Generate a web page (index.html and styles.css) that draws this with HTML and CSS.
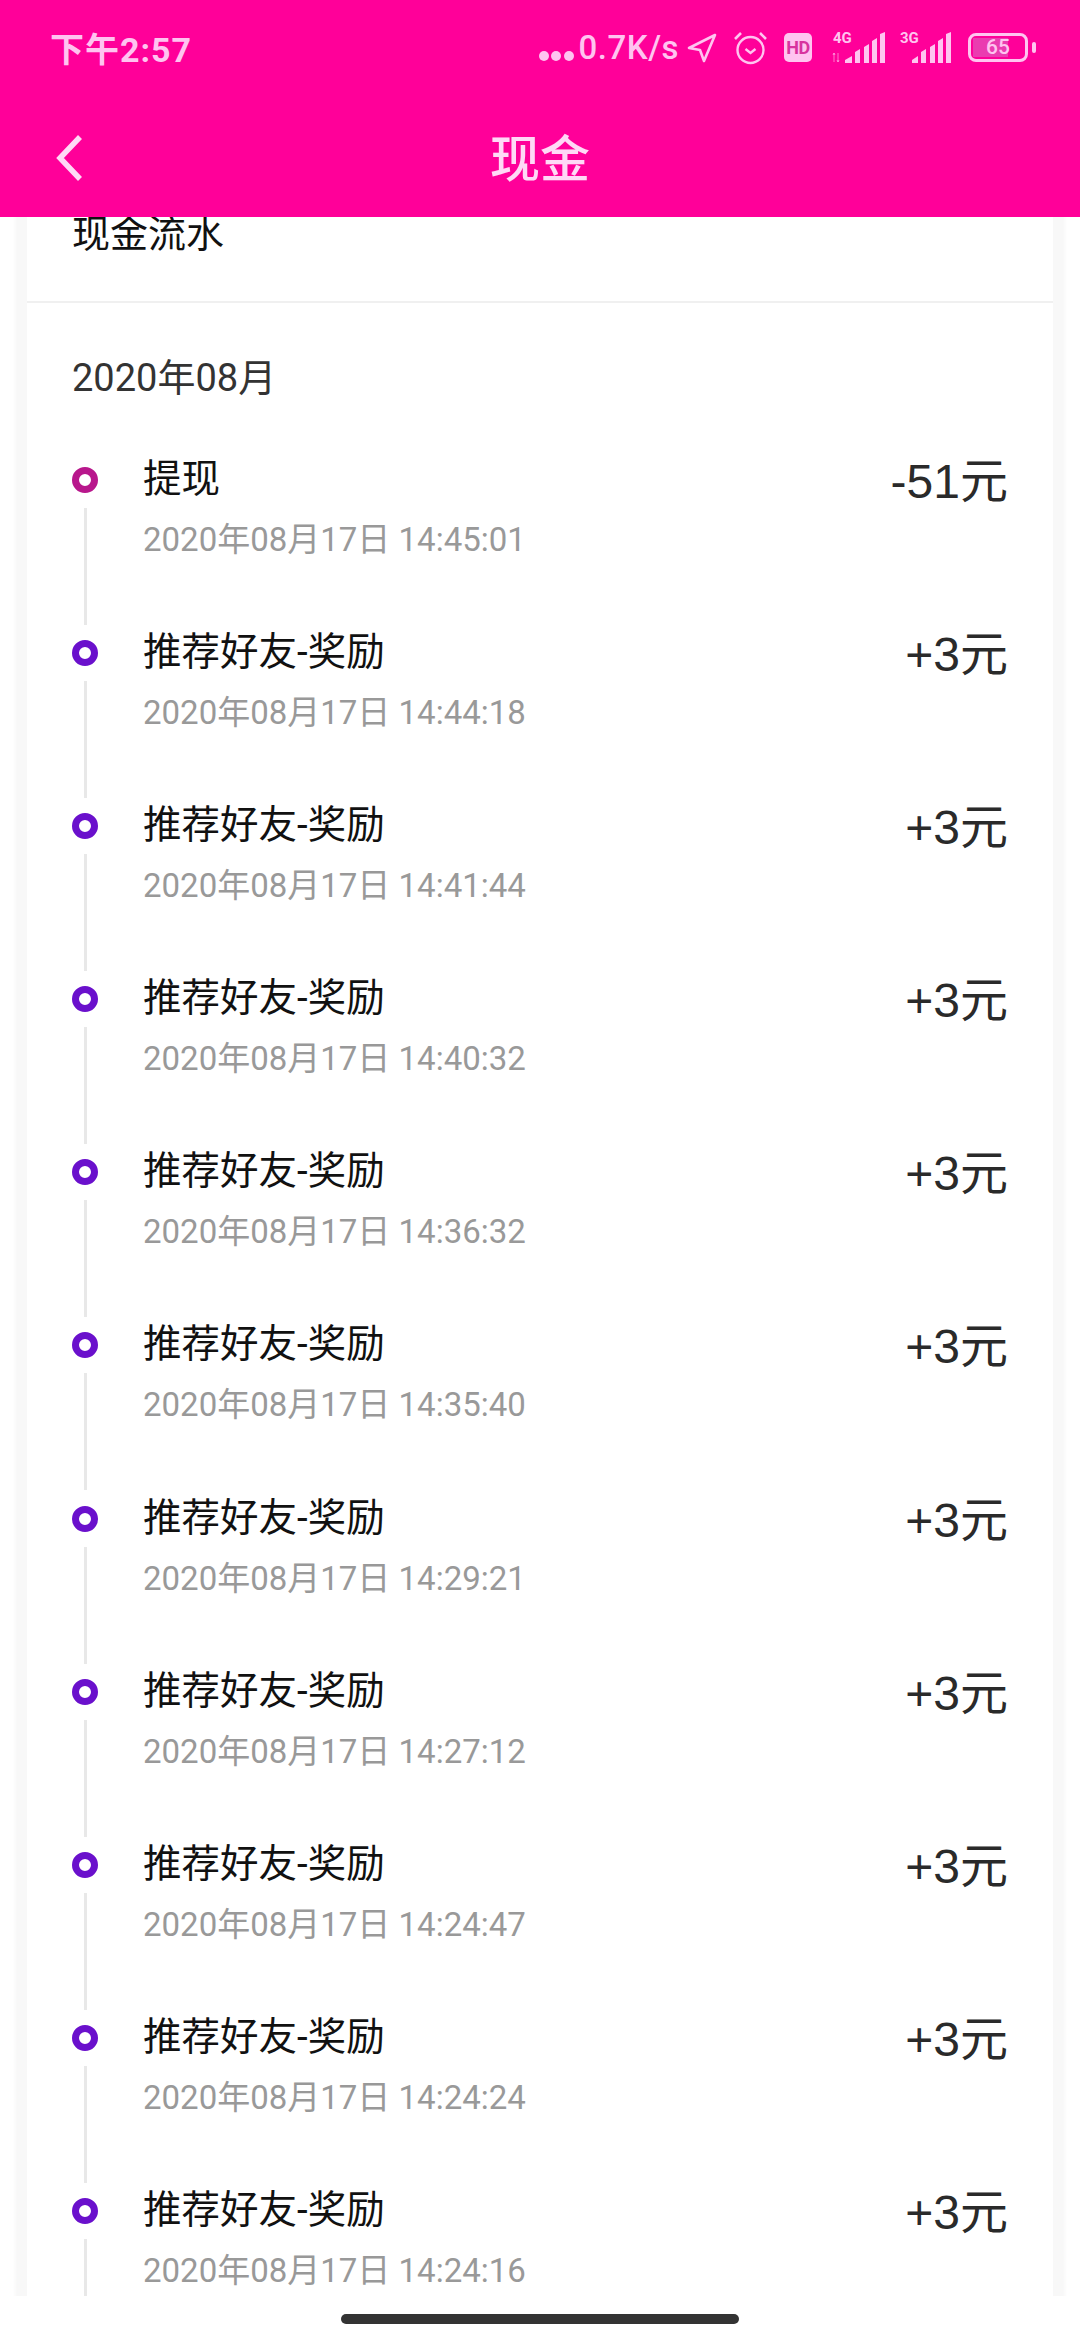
FILE: index.html
```html
<!DOCTYPE html>
<html lang="zh-CN">
  <head>
    <meta charset="UTF-8" />
    <meta name="viewport" content="width=device-width, initial-scale=1.0" />
    <title>现金</title>
    <link rel="stylesheet" href="styles.css">
  </head>
  <body>
    <header class="appbar">
      <div class="status">
        <span class="clock">下午2:57</span>
        <div class="status-icons">
          <span class="more"><i></i><i></i><i></i></span>
          <span class="speed">0.7K/s</span>
          <svg class="ico" width="30" height="30" viewBox="0 0 30 30"><path d="M28 2 2 15l11 2 4 11z" fill="none" stroke="currentColor" stroke-width="2.6" stroke-linejoin="round"/></svg>
          <svg class="ico ico-alarm" width="35" height="34" viewBox="0 0 35 34"><circle cx="17.5" cy="19" r="13" fill="none" stroke="currentColor" stroke-width="2.4"/><path d="M12.5 18l5 4 5-4" fill="none" stroke="currentColor" stroke-width="2.4"/><path d="M2 8l6-6M33 8l-6-6" stroke="currentColor" stroke-width="2.6"/></svg>
          <span class="hd">HD</span>
          <svg class="ico ico-net ico-4g" width="54" height="38" viewBox="0 -6 54 38"><text x="1" y="11" class="net-label">4G</text><path d="M2 21v9M1 23l1-2 1 2M6 21v9M5 28l1 2 1-2" stroke="currentColor" stroke-width="1" fill="none" opacity=".6"/><path d="M13 31v-3l7-4v7zM23 31V20l5-3v14zM32 31V15l5-3v19zM40 31V9l5-3v25zM48 31V2l5-2v31z" fill="currentColor"/></svg>
          <svg class="ico ico-net ico-3g" width="52" height="38" viewBox="0 -6 52 38"><text x="0" y="11" class="net-label">3G</text><path d="M12 31v-3l6-4v7zM21 31V20l5-3v14zM30 31V15l5-3v19zM38 31V9l5-3v25zM46 31V2l5-2v31z" fill="currentColor"/></svg>
          <span class="battery"><span class="battery-fill"></span><span class="battery-num">65</span></span>
        </div>
      </div>
      <nav class="navbar">
        <svg width="34" height="48" viewBox="0 0 34 48"><path d="M28 3 8 24l20 21" fill="none" stroke="currentColor" stroke-width="5.5"/></svg>
        <h1>现金</h1>
      </nav>
    </header>

    <main class="scroller">
      <section class="card">
        <h2 class="card-head">现金流水</h2>
        <h3 class="month">2020年08月</h3>
        <ul class="flow">
          <li class="flow-item withdraw">
            <div class="rail"><span class="dot"></span><span class="line"></span></div>
            <div class="info"><p class="name">提现</p><p class="time">2020年08月17日 14:45:01</p></div>
            <div class="amount">-51元</div>
          </li>
          <li class="flow-item">
            <div class="rail"><span class="dot"></span><span class="line"></span></div>
            <div class="info"><p class="name">推荐好友-奖励</p><p class="time">2020年08月17日 14:44:18</p></div>
            <div class="amount">+3元</div>
          </li>
          <li class="flow-item">
            <div class="rail"><span class="dot"></span><span class="line"></span></div>
            <div class="info"><p class="name">推荐好友-奖励</p><p class="time">2020年08月17日 14:41:44</p></div>
            <div class="amount">+3元</div>
          </li>
          <li class="flow-item">
            <div class="rail"><span class="dot"></span><span class="line"></span></div>
            <div class="info"><p class="name">推荐好友-奖励</p><p class="time">2020年08月17日 14:40:32</p></div>
            <div class="amount">+3元</div>
          </li>
          <li class="flow-item">
            <div class="rail"><span class="dot"></span><span class="line"></span></div>
            <div class="info"><p class="name">推荐好友-奖励</p><p class="time">2020年08月17日 14:36:32</p></div>
            <div class="amount">+3元</div>
          </li>
          <li class="flow-item">
            <div class="rail"><span class="dot"></span><span class="line"></span></div>
            <div class="info"><p class="name">推荐好友-奖励</p><p class="time">2020年08月17日 14:35:40</p></div>
            <div class="amount">+3元</div>
          </li>
          <li class="flow-item">
            <div class="rail"><span class="dot"></span><span class="line"></span></div>
            <div class="info"><p class="name">推荐好友-奖励</p><p class="time">2020年08月17日 14:29:21</p></div>
            <div class="amount">+3元</div>
          </li>
          <li class="flow-item">
            <div class="rail"><span class="dot"></span><span class="line"></span></div>
            <div class="info"><p class="name">推荐好友-奖励</p><p class="time">2020年08月17日 14:27:12</p></div>
            <div class="amount">+3元</div>
          </li>
          <li class="flow-item">
            <div class="rail"><span class="dot"></span><span class="line"></span></div>
            <div class="info"><p class="name">推荐好友-奖励</p><p class="time">2020年08月17日 14:24:47</p></div>
            <div class="amount">+3元</div>
          </li>
          <li class="flow-item">
            <div class="rail"><span class="dot"></span><span class="line"></span></div>
            <div class="info"><p class="name">推荐好友-奖励</p><p class="time">2020年08月17日 14:24:24</p></div>
            <div class="amount">+3元</div>
          </li>
          <li class="flow-item">
            <div class="rail"><span class="dot"></span><span class="line"></span></div>
            <div class="info"><p class="name">推荐好友-奖励</p><p class="time">2020年08月17日 14:24:16</p></div>
            <div class="amount">+3元</div>
          </li>
        </ul>
      </section>
    </main>

    <footer class="home-bar"><span class="home-pill"></span></footer>
  </body>
</html>
```

FILE: styles.css
```css
* {
  box-sizing: border-box;
}
html,
body {
  margin: 0;
  padding: 0;
}
body {
  width: 1080px;
  height: 2340px;
  display: flex;
  flex-direction: column;
  overflow: hidden;
  background-color: #fff;
  font-family: Roboto, "Noto Sans CJK SC", sans-serif;
}
h1,
h2,
h3,
p,
ul {
  margin: 0;
  padding: 0;
  font-weight: 400;
}
ul {
  list-style: none;
}

/* top bar */
.appbar {
  flex: none;
  height: 217px;
  background-color: #ff0099;
  color: #ffc4f0;
  position: relative;
  z-index: 2;
}
.status {
  height: 98px;
  padding: 0 52px 3px 50px;
  display: flex;
  align-items: center;
  justify-content: space-between;
}
.clock {
  font-size: 34px;
  font-weight: 700;
  letter-spacing: 1px;
}
.status-icons {
  display: flex;
  align-items: center;
}
.ico {
  display: block;
  flex: none;
}
.more {
  display: flex;
  gap: 2.5px;
  margin-top: 16px;
  margin-right: 5px;
}
.more i {
  width: 10px;
  height: 10px;
  border-radius: 50%;
  background-color: currentColor;
}
.speed {
  font-size: 33px;
  font-weight: 500;
  margin-right: 8px;
  letter-spacing: 0.5px;
}
.ico-alarm {
  margin-left: 16px;
}
.hd {
  width: 28px;
  height: 29px;
  margin-left: 16px;
  border-radius: 5px;
  background-color: #ffc4f0;
  color: #d8339f;
  font-size: 18px;
  font-weight: 700;
  line-height: 29px;
  text-align: center;
  letter-spacing: -0.5px;
}
.ico-net {
  margin-top: -6px;
}
.ico-4g {
  margin-left: 20px;
}
.ico-3g {
  margin-left: 14px;
}
.net-label {
  font-family: Roboto, sans-serif;
  font-size: 15px;
  font-weight: 700;
  fill: currentColor;
}
.battery {
  flex: none;
  width: 60px;
  height: 29px;
  margin-left: 16px;
  border: 3px solid currentColor;
  border-radius: 8px;
  position: relative;
  display: flex;
  align-items: center;
  justify-content: center;
}
.battery::after {
  content: "";
  position: absolute;
  right: -11px;
  top: 6px;
  width: 4px;
  height: 11px;
  border-radius: 2px;
  background-color: currentColor;
}
.battery-fill {
  position: absolute;
  left: 2px;
  top: 2px;
  bottom: 2px;
  width: 65%;
  background-color: #ea3cb0;
}
.battery-num {
  position: relative;
  font-size: 21px;
  line-height: 23px;
  font-weight: 500;
}
.navbar {
  height: 119px;
  display: grid;
  grid-template-columns: 1fr auto 1fr;
  align-items: center;
  padding: 0 52px;
  color: #ffd9f6;
}
.navbar svg {
  display: block;
}
.navbar h1 {
  margin-bottom: 5px;
  font-size: 50px;
  font-weight: 500;
}

/* scrolled content */
.scroller {
  flex: 1;
  min-height: 0;
  overflow: hidden;
  padding: 0 27px;
}
.card {
  margin-top: -40px;
  background-color: #fff;
  box-shadow: 0 0 4px 12px #f8f8f8;
}
.card-head {
  height: 126px;
  padding: 32px 0 0 45px;
  border-bottom: 2px solid #f0f0f0;
  font-size: 38px;
  line-height: 50px;
  color: #111;
}
.month {
  padding: 50px 0 53px 45px;
  font-size: 38px;
  line-height: 50px;
  color: #333;
}
.flow-item {
  height: 173.1px;
  padding: 0 45px 0 45px;
  display: flex;
}
.rail {
  width: 26px;
  padding-top: 11px;
  display: flex;
  flex-direction: column;
  align-items: center;
}
.dot {
  flex: none;
  width: 26px;
  height: 26px;
  border: 7.5px solid #6a10cc;
  border-radius: 50%;
}
.line {
  flex: none;
  width: 3px;
  height: 117px;
  margin-top: 15px;
  background-color: #e8e8e8;
}
.withdraw .dot {
  border-color: #b8178c;
}
.info {
  flex: 1;
  padding: 1px 0 0 45px;
}
.name {
  font-size: 38.5px;
  line-height: 44px;
  color: #111;
}
.time {
  margin-top: 19px;
  font-size: 33px;
  line-height: 40px;
  color: #999;
}
.amount {
  font-family: "Liberation Sans", "Noto Sans CJK SC", sans-serif;
  font-size: 48px;
  line-height: 52px;
  color: #2a2a2a;
}

.home-bar {
  flex: none;
  height: 44px;
  background-color: #fff;
  display: flex;
  justify-content: center;
  padding-top: 18px;
}
.home-pill {
  width: 398px;
  height: 10px;
  border-radius: 5px;
  background-color: #333;
}
```
